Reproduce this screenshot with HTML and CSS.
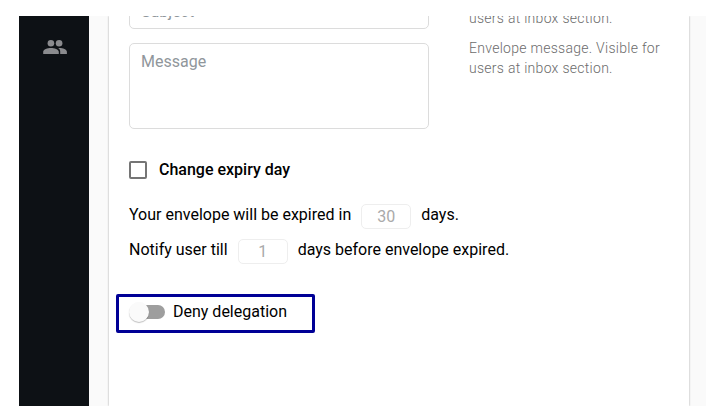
FILE: index.html
```html
<!DOCTYPE html>
<html lang="en">
<head>
<meta charset="utf-8">
<title>Envelope settings</title>
<link rel="stylesheet" href="styles.css">
</head>
<body>
<div class="app">
  <nav class="sidebar">
    <svg class="nav-icon" viewBox="0 0 24 14"><circle cx="7.900" cy="3.200" r="3.300"/><circle cx="16.100" cy="3.200" r="3.300"/><path d="M0.200 14v-2.200C.2 9.400 4.500 8 7.900 8s7.900 1.400 7.900 3.800V14zM17.200 14v-2.200c0-1.600-.7-2.800-2-3.700C19 7.700 23.900 9.300 23.900 11.800V14z"/></svg>
  </nav>
  <main class="card">
    <div class="fields">
      <div class="inputs">
        <div class="field subject">Subject</div>
        <div class="field message">Message</div>
      </div>
      <div class="hints">
        <p class="hint">users at inbox section.</p>
        <p class="hint">Envelope message. Visible for<br>users at inbox section.</p>
      </div>
    </div>
    <div class="check"><span class="checkbox"></span>Change expiry day</div>
    <div class="line">Your envelope will be expired in<span class="number">30</span>days.</div>
    <div class="line">Notify user till<span class="number">1</span>days before envelope expired.</div>
    <div class="highlight"><span class="switch"><span class="thumb"></span></span>Deny delegation</div>
  </main>
</div>
</body>
</html>
```
FILE: styles.css
```css
* { box-sizing: border-box; }
body {
  margin: 0;
  height: 406px;
  padding: 16px 0 0 19px;
  overflow: hidden;
  background: #fff;
  font: 16px/20px Roboto, sans-serif;
  color: #000;
}
.app {
  display: flex;
  height: 390px;
  overflow: hidden;
  background: #fafafa;
}
.sidebar {
  width: 70px;
  flex: none;
  background: #0d1115;
  padding: 24px 0 0 24px;
}
.nav-icon {
  display: block;
  width: 24px;
  height: 14px;
  overflow: visible;
  fill: #8a8b8e;
}
.card {
  width: 580px;
  flex: none;
  margin-left: 20px;
  padding-left: 20px;
  background: #fff;
  box-shadow: 0 0 2px rgba(0, 0, 0, .35);
}
.fields {
  display: flex;
  gap: 40px;
  height: 113px;
}
.inputs { width: 300px; margin-top: -27px; }
.field {
  border: 1px solid #dcdcdc;
  border-radius: 5px;
  padding: 8px 11px;
  color: #90969b;
}
.subject { height: 40px; padding-top: 12px; }
.message { height: 86px; margin-top: 14px; }
.hints { margin-top: -8px; }
.hint {
  margin: 0 0 10px;
  font-size: 14px;
  font-weight: 300;
  letter-spacing: .28px;
  color: #6c6c6c;
  white-space: nowrap;
}
.check {
  display: flex;
  align-items: center;
  gap: 12px;
  height: 20px;
  margin: 31px 0 22px;
  font-weight: 500;
}
.checkbox {
  width: 18px;
  height: 18px;
  border: 2px solid #757575;
  border-radius: 2px;
}
.line {
  display: flex;
  align-items: center;
  height: 25px;
  margin-bottom: 10px;
  white-space: nowrap;
}
.number {
  width: 50px;
  height: 25px;
  margin: 3px 10px 0;
  border: 1px solid #eee;
  border-radius: 5px;
  text-align: center;
  line-height: 23px;
  color: #aaa;
}
.highlight {
  display: flex;
  align-items: center;
  width: 199px;
  height: 39px;
  margin: 32px 0 0 -13px;
  padding: 0 0 3px 12px;
  border: 3px solid #000096;
  border-radius: 2px;
}
.switch {
  display: flex;
  align-items: center;
  width: 34px;
  height: 14px;
  margin-right: 8px;
  border-radius: 7px;
  background: #9e9e9e;
}
.thumb {
  width: 20px;
  height: 20px;
  flex: none;
  margin-left: -2px;
  border-radius: 50%;
  background: #fafafa;
  box-shadow: 0 1px 1px rgba(0, 0, 0, .25);
}
```
